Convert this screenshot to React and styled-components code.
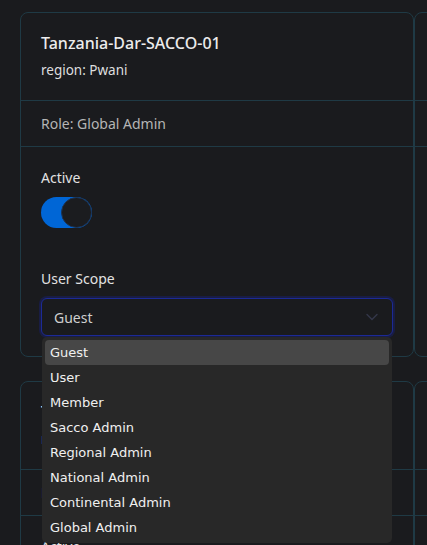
import React from 'react';
import styled, { createGlobalStyle } from 'styled-components';

const GlobalStyle = createGlobalStyle`
  html, body {
    margin: 0;
    background: #1a1b1e;
    overflow: hidden;
  }
  body {
    font-family: 'Noto Sans', 'Open Sans', sans-serif;
    color: #e6e6e6;
  }
`;

const scopes = [
  'Guest',
  'User',
  'Member',
  'Sacco Admin',
  'Regional Admin',
  'National Admin',
  'Continental Admin',
  'Global Admin',
];

const cards = [
  { name: 'Tanzania-Dar-SACCO-01', region: 'Pwani', role: 'Global Admin', open: true },
  { name: 'Kenya-Nairobi-SACCO-02', region: 'Nairobi', role: 'Sacco Admin' },
  { name: 'Tanzania-Arusha-SACCO-03', region: 'Arusha', role: 'Member' },
  { name: 'Kenya-Mombasa-SACCO-04', region: 'Pwani', role: 'User' },
];

const Chevron = () => (
  <svg width="12" height="8" viewBox="0 0 12 8" fill="none">
    <path d="M1 1.5l5 5 5-5" stroke="#34374a" strokeWidth="1.4" strokeLinecap="round" />
  </svg>
);

const UserCard = ({ name, region, role, open }) => {
  return (
    <Card>
      <Header>
        <Name>{name}</Name>
        <Region>region: {region}</Region>
      </Header>
      <Role>Role: {role}</Role>
      <Body>
        <Label>Active</Label>
        <Toggle>
          <Knob />
        </Toggle>
        <Label className="scope">User Scope</Label>
        <SelectWrap>
          <Select className={open ? 'focused' : ''}>
            <span>Guest</span>
            <Chevron />
          </Select>
          {open && (
            <Menu>
              {scopes.map((s, i) => (
                <Option key={s} className={i === 0 ? 'active' : ''}>
                  {s}
                </Option>
              ))}
            </Menu>
          )}
        </SelectWrap>
      </Body>
    </Card>
  );
};

const App = () => {
  return (
    <>
      <GlobalStyle />
      <Grid>
        {cards.map((c) => (
          <UserCard key={c.name} {...c} />
        ))}
      </Grid>
    </>
  );
};

const Grid = styled.div`
  display: grid;
  grid-template-columns: 394px 394px;
  row-gap: 24px;
  padding: 12px 0 0 20px;
  width: 900px;
`;

const Card = styled.div`
  border: 1px solid #1f3a45;
  border-radius: 8px;
  background: #1a1b1e;
  height: 345px;
  box-sizing: border-box;
`;

const Header = styled.div`
  height: 88px;
  box-sizing: border-box;
  padding: 20px 20px 0;
  border-bottom: 1px solid #1f3a45;
`;

const Name = styled.div`
  font-size: 16px;
  line-height: 20px;
  font-weight: 500;
  color: #ececec;
`;

const Region = styled.div`
  font-size: 13.5px;
  line-height: 18px;
  margin-top: 8px;
  color: #dedede;
`;

const Role = styled.div`
  height: 46px;
  box-sizing: border-box;
  padding: 0 20px;
  display: flex;
  align-items: center;
  font-size: 14px;
  color: #b5b5b5;
  border-bottom: 1px solid #1f3a45;
`;

const Body = styled.div`
  padding: 22px 20px 0;
`;

const Label = styled.div`
  font-size: 14px;
  line-height: 18px;
  color: #e2e2e2;
  &.scope {
    margin-top: 42px;
  }
`;

const Toggle = styled.div`
  margin-top: 10px;
  width: 51px;
  height: 31px;
  border-radius: 16px;
  background: #0066d6;
  position: relative;
  box-sizing: border-box;
`;

const Knob = styled.div`
  position: absolute;
  right: 0;
  top: 0;
  width: 31px;
  height: 31px;
  border-radius: 50%;
  background: #1b1c1f;
  border: 1px solid #1d3352;
  box-sizing: border-box;
`;

const SelectWrap = styled.div`
  position: relative;
  margin-top: 10px;
`;

const Select = styled.div`
  height: 38px;
  box-sizing: border-box;
  border: 1px solid #2a2d33;
  border-radius: 6px;
  padding: 0 14px 0 12px;
  display: flex;
  align-items: center;
  justify-content: space-between;
  font-size: 14px;
  color: #cfcfcf;
  background: #1a1b1e;

  &.focused {
    border-color: #1c2a96;
    box-shadow: 0 0 0 2px #191d44;
  }
`;

const Menu = styled.div`
  position: absolute;
  left: 1px;
  right: 1px;
  top: 39px;
  z-index: 10;
  background: #282828;
  border-radius: 5px;
  padding: 3px;
  box-sizing: border-box;
  font-family: 'DejaVu Sans', 'Noto Sans', sans-serif;
`;

const Option = styled.div`
  height: 25px;
  display: flex;
  align-items: center;
  padding: 0 6px 0 5px;
  font-size: 13px;
  color: #f0f0f0;
  border-radius: 4px;

  &.active {
    background: #474747;
  }
`;

export default App;
